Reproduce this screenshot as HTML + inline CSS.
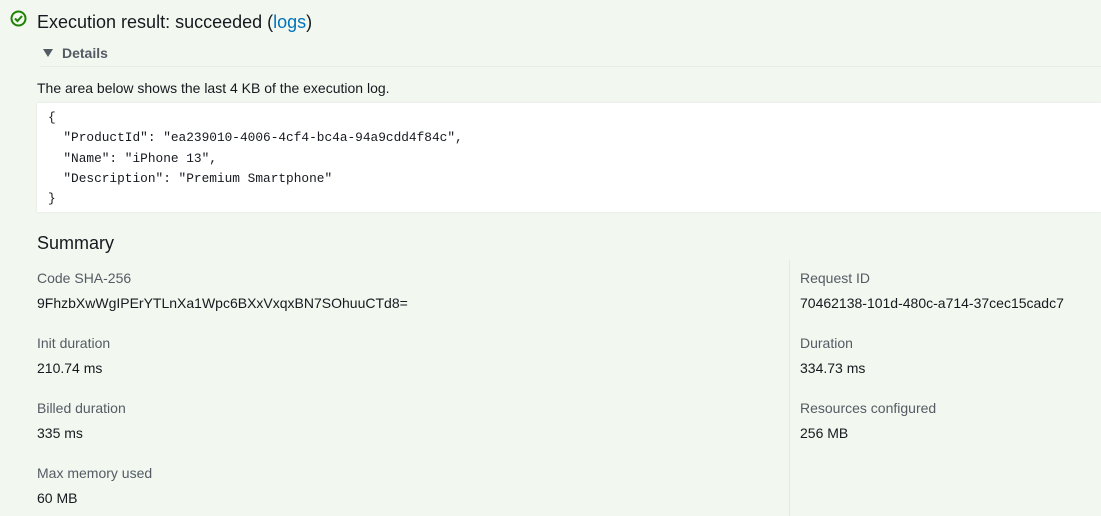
<!DOCTYPE html>
<html><head><style>
body{margin:0;width:1101px;height:516px;background:#f2f8f0;font-family:"Liberation Sans",sans-serif;color:#16191f;position:relative;overflow:hidden}
.a{position:absolute;white-space:nowrap}
.lbl{color:#545b64;font-size:14px}
.val{font-size:14px}
</style></head><body>
<svg class="a" style="left:10px;top:10px" width="17" height="17" viewBox="0 0 17 17"><circle cx="8.5" cy="8.5" r="7" fill="none" stroke="#1d8102" stroke-width="2"/><path d="M5 8.5l2.5 2.5 4.5-5" fill="none" stroke="#1d8102" stroke-width="2"/></svg>
<div class="a" style="left:37px;top:12px;font-size:18px">Execution result: succeeded (<span style="color:#0073bb">logs</span>)</div>
<svg class="a" style="left:42px;top:48px" width="12" height="10" viewBox="0 0 12 10"><path d="M1 1h10L6 9z" fill="#545b64"/></svg>
<div class="a" style="left:62px;top:45px;font-size:14px;font-weight:bold;color:#545b64">Details</div>
<div class="a" style="left:40px;top:66px;width:1061px;height:1px;background:#e6ebe4"></div>
<div class="a" style="left:37px;top:80px;font-size:14px">The area below shows the last 4 KB of the execution log.</div>
<div class="a" style="left:37px;top:103px;width:1064px;height:109px;background:#fff;box-shadow:0 0 2px #dde3da"></div>
<pre class="a" style="left:48px;top:108px;margin:0;white-space:pre;font-family:'Liberation Mono',monospace;font-size:12.8px;line-height:20.3px;color:#16191f">{
  "ProductId": "ea239010-4006-4cf4-bc4a-94a9cdd4f84c",
  "Name": "iPhone 13",
  "Description": "Premium Smartphone"
}</pre>
<div class="a" style="left:37px;top:233px;font-size:18px">Summary</div>
<div class="a" style="left:789px;top:260px;width:1px;height:256px;background:#e4eae1"></div>
<div class="a lbl" style="left:37px;top:270px">Code SHA-256</div>
<div class="a val" style="left:37px;top:295px">9FhzbXwWgIPErYTLnXa1Wpc6BXxVxqxBN7SOhuuCTd8=</div>
<div class="a lbl" style="left:37px;top:335px">Init duration</div>
<div class="a val" style="left:37px;top:360px">210.74 ms</div>
<div class="a lbl" style="left:37px;top:400px">Billed duration</div>
<div class="a val" style="left:37px;top:425px">335 ms</div>
<div class="a lbl" style="left:37px;top:465px">Max memory used</div>
<div class="a val" style="left:37px;top:490px">60 MB</div>
<div class="a lbl" style="left:800px;top:270px">Request ID</div>
<div class="a val" style="left:800px;top:295px">70462138-101d-480c-a714-37cec15cadc7</div>
<div class="a lbl" style="left:800px;top:335px">Duration</div>
<div class="a val" style="left:800px;top:360px">334.73 ms</div>
<div class="a lbl" style="left:800px;top:400px">Resources configured</div>
<div class="a val" style="left:800px;top:425px">256 MB</div>
</body></html>
